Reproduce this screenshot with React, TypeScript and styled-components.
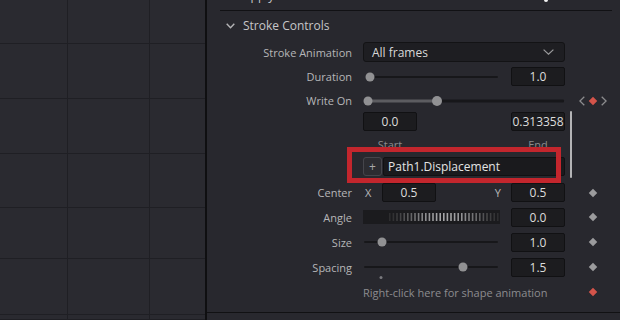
import React from "react";
import styled, { createGlobalStyle } from "styled-components";

const Global = createGlobalStyle`
  html, body { margin: 0; padding: 0; background: #28282e; }
  body { font-family: "Open Sans", "Noto Sans", sans-serif; }
  * { box-sizing: border-box; }
`;

const Screen = styled.div`
  display: flex;
  width: 620px;
  height: 320px;
  overflow: hidden;
  background: #28282e;
`;

const Viewer = styled.div`
  width: 205px;
  flex: none;
  display: grid;
  grid-template-columns: 68px 82px 1fr;
  grid-template-rows: 44px 55px 55px 54px 51px 56px 1fr;
  background: #2a2a30;
`;

const Cell = styled.div<{ $last?: boolean }>`
  border-right: ${(p) => (p.$last ? "none" : "1px solid #1f1f24")};
  border-bottom: 1px solid #1f1f24;
`;

const Divider = styled.div`
  width: 2px;
  flex: none;
  background: #0f0f11;
`;

const Inspector = styled.div`
  flex: 1;
  position: relative;
  display: flex;
  flex-direction: column;
  background: #28282e;
`;

const Body = styled.div`
  flex: 1;
  overflow: hidden;
`;

const Content = styled.div`
  margin-top: -20px;
  display: flex;
  flex-direction: column;
`;

const Footer = styled.div`
  height: 8px;
  flex: none;
  border-top: 1px solid #111113;
`;

const SectionHeader = styled.div<{ $h: number }>`
  display: flex;
  align-items: center;
  height: ${(p) => p.$h}px;
  padding-left: 19px;
  gap: 8px;
  font-size: 12px;
  color: #c6c6c8;
`;

const HeaderMark = styled.span`
  margin-left: auto;
  margin-right: 72px;
  width: 4px;
  height: 14px;
  border-radius: 2px;
  background: #f2f2f2;
`;

const Separator = styled.div`
  height: 1px;
  margin: 0 8px 0 13px;
  background: #111114;
`;

const Row = styled.div<{ $h: number }>`
  display: flex;
  align-items: center;
  height: ${(p) => p.$h}px;
`;

const Label = styled.div`
  width: 145px;
  flex: none;
  margin-right: 11px;
  text-align: right;
  font-size: 11px;
  color: #b6b6b8;
  white-space: nowrap;
`;

const Control = styled.div<{ $between?: boolean }>`
  width: 202px;
  flex: none;
  display: flex;
  align-items: center;
  justify-content: ${(p) => (p.$between ? "space-between" : "flex-start")};
`;

const Key = styled.div`
  width: 55px;
  flex: none;
  display: flex;
  align-items: center;
  justify-content: center;
  gap: 5px;
`;

const Dropdown = styled.div`
  width: 202px;
  height: 20px;
  display: flex;
  align-items: center;
  justify-content: space-between;
  padding: 0 10px 0 8px;
  background: #1e1e22;
  border: 1px solid #131315;
  border-radius: 3px;
  font-size: 12px;
  color: #d8d8d8;
`;

const NumberBox = styled.div`
  width: 54px;
  height: 19px;
  flex: none;
  display: flex;
  align-items: center;
  justify-content: center;
  background: #1c1c1f;
  border: 1px solid #111113;
  border-radius: 2px;
  font-size: 12px;
  color: #dcdcdc;
`;

const SliderBox = styled.div<{ $w: number; $gap?: number }>`
  position: relative;
  width: ${(p) => p.$w}px;
  height: 12px;
  flex: none;
  margin-right: ${(p) => p.$gap ?? 0}px;
`;

const TrackLine = styled.div<{ $light?: boolean; $thick?: number }>`
  position: absolute;
  top: 50%;
  height: ${(p) => p.$thick ?? 2}px;
  transform: translateY(-50%);
  background: ${(p) => (p.$light ? "#5c5c60" : "#17171a")};
  border-radius: 1px;
`;

const Thumb = styled.div<{ $size?: number }>`
  position: absolute;
  top: 50%;
  width: ${(p) => p.$size ?? 9}px;
  height: ${(p) => p.$size ?? 9}px;
  border-radius: 50%;
  background: #919193;
  transform: translate(-50%, -50%);
`;

const TinyDot = styled.div`
  position: absolute;
  top: 15px;
  width: 3px;
  height: 3px;
  border-radius: 50%;
  background: #7a7a7e;
  transform: translateX(-50%);
`;

const Diamond = styled.div<{ $red?: boolean }>`
  width: 6px;
  height: 6px;
  transform: rotate(45deg);
  background: ${(p) => (p.$red ? "#d4544a" : "#9b9b9d")};
`;

const SubLabel = styled.div`
  width: 54px;
  text-align: center;
  font-size: 11px;
  color: #8a8a8c;
`;

const PlusButton = styled.div`
  width: 19px;
  height: 19px;
  flex: none;
  display: flex;
  align-items: center;
  justify-content: center;
  margin-right: 1px;
  background: #2c2c31;
  border: 1px solid #45454b;
  border-radius: 3px;
  font-size: 12px;
  color: #a8a8aa;
`;

const PathField = styled.div`
  flex: 1;
  height: 19px;
  display: flex;
  align-items: center;
  padding-left: 4px;
  background: #1a1a1d;
  border: 1px solid #111113;
  border-radius: 2px;
  font-size: 12px;
  color: #e4e4e4;
`;

const AxisLabel = styled.div<{ $w?: number; $mr?: number }>`
  width: ${(p) => (p.$w ? `${p.$w}px` : "auto")};
  flex: none;
  padding-left: ${(p) => (p.$w ? 2 : 0)}px;
  margin-right: ${(p) => p.$mr ?? 0}px;
  font-size: 11px;
  color: #b6b6b8;
`;

const Spacer = styled.div`
  flex: 1;
`;

const Wheel = styled.div`
  width: 137px;
  height: 14px;
  flex: none;
  margin-right: 11px;
  background: #1b1b1e;
  display: flex;
`;

const HintText = styled.div`
  font-size: 11px;
  color: #8c8c8e;
  white-space: nowrap;
`;

const Annotation = styled.div`
  position: absolute;
  left: 140px;
  top: 147px;
  width: 214px;
  height: 36px;
  border: 5px solid #c3262d;
  pointer-events: none;
`;

const ScrollThumb = styled.div`
  position: absolute;
  left: 363px;
  top: 111px;
  width: 2px;
  height: 67px;
  border-radius: 1px;
  background: #b4b4b6;
`;

const Chevron = () => (
  <svg width="9" height="6" viewBox="0 0 9 6">
    <polyline points="0.7,0.7 4.5,4.8 8.3,0.7" fill="none" stroke="#b4b4b6" strokeWidth="1.4" />
  </svg>
);

const DropChevron = () => (
  <svg width="11" height="6" viewBox="0 0 11 6">
    <polyline points="0.6,0.6 5.5,5.2 10.4,0.6" fill="none" stroke="#9a9a9c" strokeWidth="1.2" />
  </svg>
);

const Arrow = ({ dir }: { dir: "l" | "r" }) => (
  <svg width="6" height="10" viewBox="0 0 6 10">
    <polyline
      points={dir === "l" ? "5.3,0.7 0.9,5 5.3,9.3" : "0.7,0.7 5.1,5 0.7,9.3"}
      fill="none"
      stroke="#8c8c8e"
      strokeWidth="1.3"
    />
  </svg>
);

const WheelTicks = () => {
  const ticks: React.ReactNode[] = [];
  const start = 26;
  const end = 135;
  for (let x = start; x <= end; x += 3.6) {
    const t = (x - start) / (end - start);
    const a = Math.pow(Math.sin(Math.PI * t), 1.4);
    const v = Math.round(45 + a * 120);
    ticks.push(
      <rect key={x} x={x} y={3} width={1.6} height={8} fill={`rgb(${v},${v},${v + 2})`} />
    );
  }
  return (
    <svg width="137" height="14" viewBox="0 0 137 14">
      {ticks}
    </svg>
  );
};

type SliderProps = { thumb: number; from?: number; to?: number; dot?: number };

const Slider = ({ thumb, from = 1, to = 135, dot }: SliderProps) => (
  <SliderBox $w={137} $gap={11}>
    <TrackLine style={{ left: from, width: to - from }} />
    {dot !== undefined && <TinyDot style={{ left: dot }} />}
    <Thumb style={{ left: thumb }} />
  </SliderBox>
);

export default function App() {
  const cells: React.ReactNode[] = [];
  for (let r = 0; r < 7; r++) {
    for (let c = 0; c < 3; c++) {
      cells.push(<Cell key={`${r}-${c}`} $last={c === 2} />);
    }
  }
  return (
    <>
      <Global />
      <Screen>
        <Viewer>{cells}</Viewer>
        <Divider />
        <Inspector>
          <Body>
            <Content>
              <SectionHeader $h={30}>
                <Chevron />
                <span>Apply Controls</span>
                <HeaderMark />
              </SectionHeader>
              <Separator />
              <SectionHeader $h={29}>
                <Chevron />
                <span>Stroke Controls</span>
              </SectionHeader>

              <Row $h={24}>
                <Label>Stroke Animation</Label>
                <Control>
                  <Dropdown>
                    <span>All frames</span>
                    <DropChevron />
                  </Dropdown>
                </Control>
              </Row>

              <Row $h={25}>
                <Label>Duration</Label>
                <Control>
                  <Slider thumb={7} from={7} />
                  <NumberBox>1.0</NumberBox>
                </Control>
              </Row>

              <Row $h={23}>
                <Label>Write On</Label>
                <Control>
                  <SliderBox $w={202}>
                    <TrackLine $thick={3} style={{ left: 74, width: 127 }} />
                    <TrackLine $light $thick={3} style={{ left: 5, width: 69 }} />
                    <Thumb $size={9} style={{ left: 5 }} />
                    <Thumb $size={10} style={{ left: 74 }} />
                  </SliderBox>
                </Control>
                <Key>
                  <Arrow dir="l" />
                  <Diamond $red />
                  <Arrow dir="r" />
                </Key>
              </Row>

              <Row $h={19}>
                <Label />
                <Control $between>
                  <NumberBox>0.0</NumberBox>
                  <NumberBox>0.313358</NumberBox>
                </Control>
              </Row>

              <Row $h={26}>
                <Label />
                <Control $between>
                  <SubLabel>Start</SubLabel>
                  <SubLabel>End</SubLabel>
                </Control>
              </Row>

              <Row $h={23}>
                <Label />
                <Control style={{ alignSelf: "flex-start" }}>
                  <PlusButton>+</PlusButton>
                  <PathField>Path1.Displacement</PathField>
                </Control>
              </Row>

              <Row $h={25}>
                <Label>Center</Label>
                <Control>
                  <AxisLabel $w={19}>X</AxisLabel>
                  <NumberBox>0.5</NumberBox>
                  <Spacer />
                  <AxisLabel $mr={10}>Y</AxisLabel>
                  <NumberBox>0.5</NumberBox>
                </Control>
                <Key>
                  <Diamond />
                </Key>
              </Row>

              <Row $h={24}>
                <Label>Angle</Label>
                <Control>
                  <Wheel>
                    <WheelTicks />
                  </Wheel>
                  <NumberBox>0.0</NumberBox>
                </Control>
                <Key>
                  <Diamond />
                </Key>
              </Row>

              <Row $h={26}>
                <Label>Size</Label>
                <Control>
                  <Slider thumb={19} />
                  <NumberBox>1.0</NumberBox>
                </Control>
                <Key>
                  <Diamond />
                </Key>
              </Row>

              <Row $h={24}>
                <Label>Spacing</Label>
                <Control>
                  <Slider thumb={100} dot={18} />
                  <NumberBox>1.5</NumberBox>
                </Control>
                <Key>
                  <Diamond />
                </Key>
              </Row>

              <Row $h={26}>
                <Label />
                <Control>
                  <HintText>Right-click here for shape animation</HintText>
                </Control>
                <Key>
                  <Diamond $red />
                </Key>
              </Row>
            </Content>
          </Body>
          <Footer />
          <Annotation />
          <ScrollThumb />
        </Inspector>
      </Screen>
    </>
  );
}
